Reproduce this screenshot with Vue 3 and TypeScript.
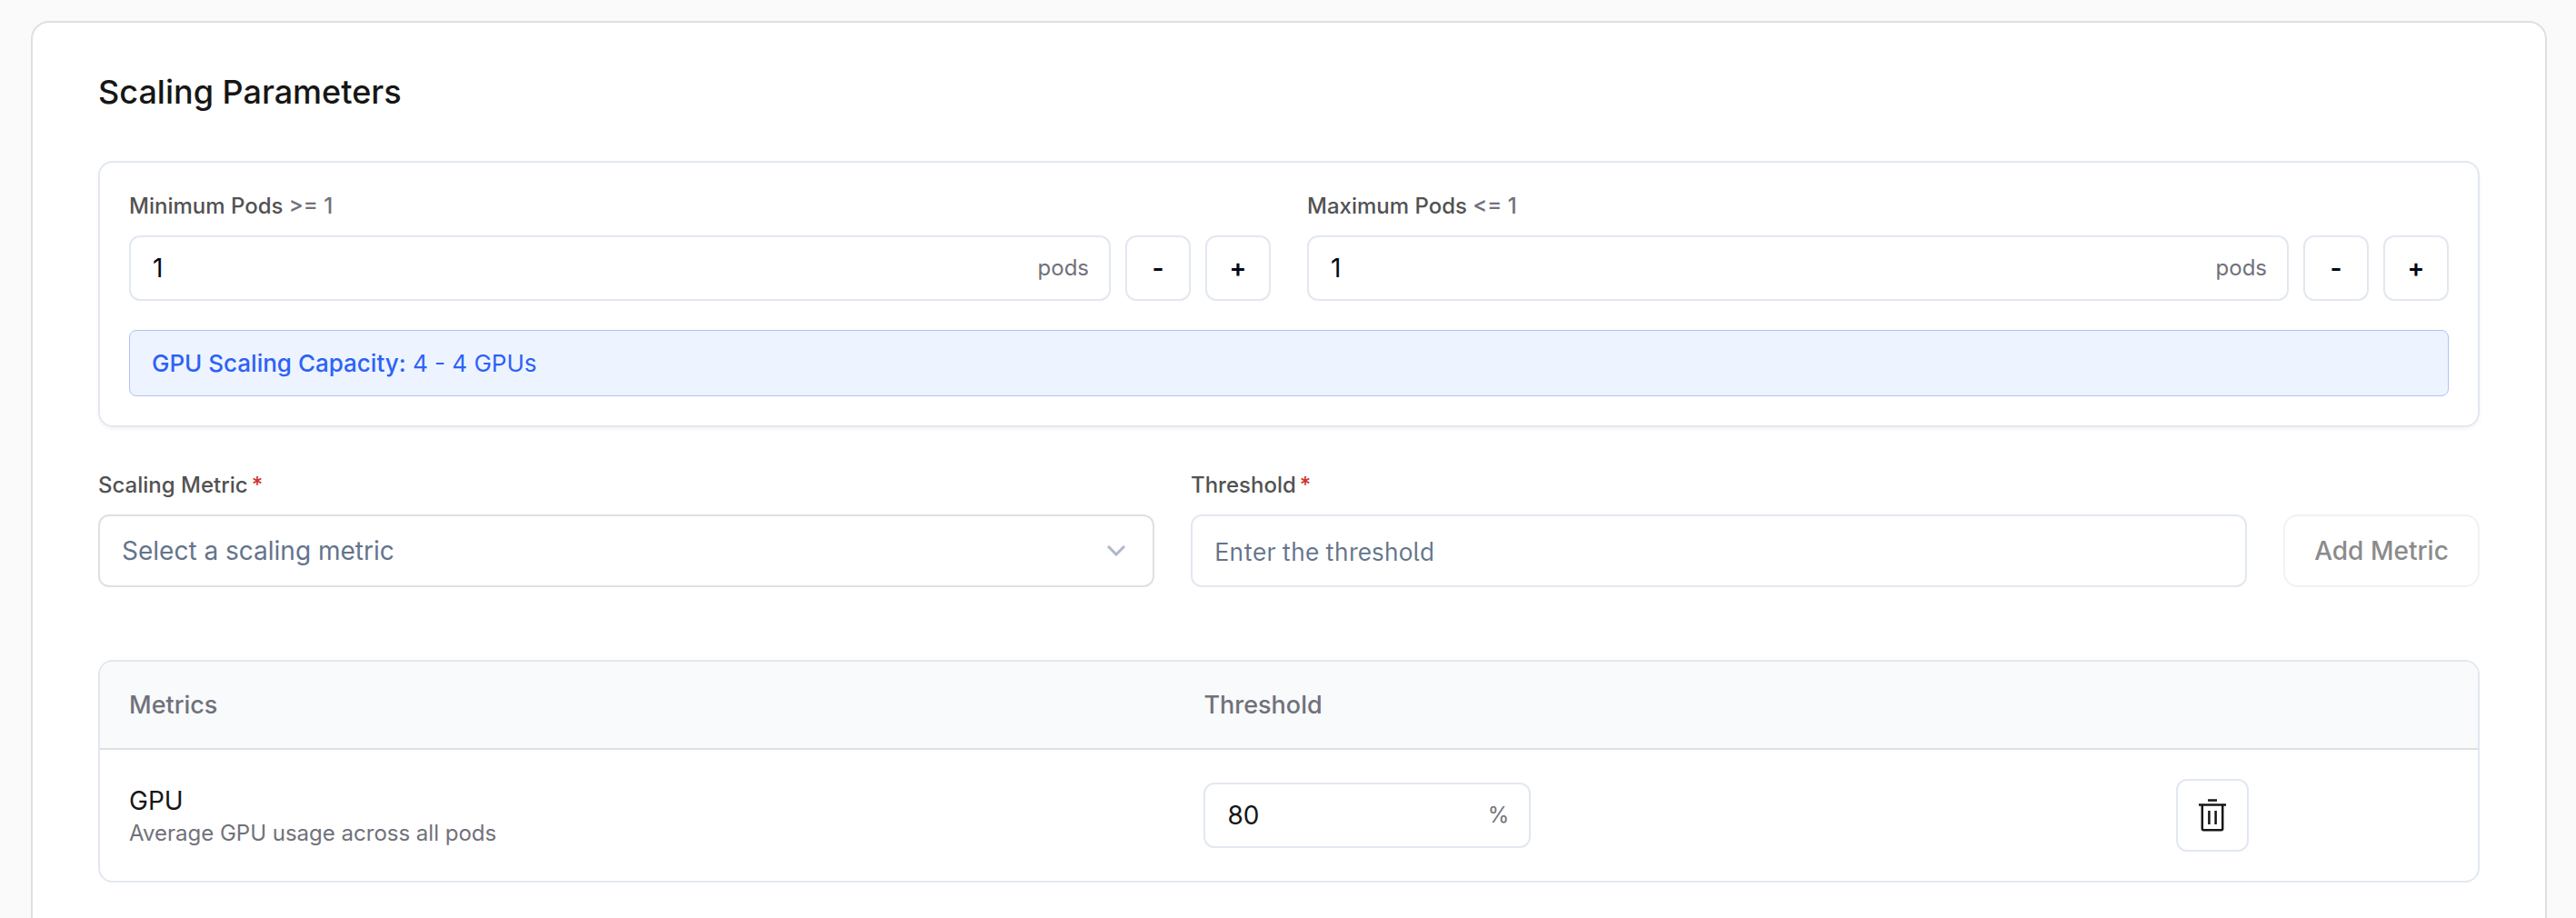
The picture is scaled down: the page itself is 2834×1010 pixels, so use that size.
<script setup lang="ts">
import { ref, reactive } from 'vue'

interface PodField {
  id: string
  label: string
  hint: string
  value: number
}

interface Metric {
  id: string
  name: string
  description: string
  threshold: number
}

const GPUS_PER_POD = 4

const podFields = reactive<PodField[]>([
  { id: 'min-pods', label: 'Minimum Pods', hint: '>= 1', value: 1 },
  { id: 'max-pods', label: 'Maximum Pods', hint: '<= 1', value: 1 },
])

const metrics = ref<Metric[]>([
  { id: 'gpu', name: 'GPU', description: 'Average GPU usage across all pods', threshold: 80 },
])

const selectedMetric = ref('')
const threshold = ref('')

function step(field: PodField, delta: number) {
  field.value = Math.max(1, Number(field.value) + delta)
}

function removeMetric(id: string) {
  metrics.value = metrics.value.filter((m) => m.id !== id)
}
</script>

<template>
  <main class="page">
    <section class="card">
      <h1 class="title">Scaling Parameters</h1>

      <div class="panel">
        <div class="pods">
          <div v-for="field in podFields" :key="field.id" class="field">
            <label class="label" :for="field.id">{{ field.label }} <span class="hint">{{ field.hint }}</span></label>
            <div class="stepper">
              <div class="box">
                <input :id="field.id" v-model="field.value" class="box-input dark" type="text" inputmode="numeric" />
                <span class="unit">pods</span>
              </div>
              <button type="button" class="step" :aria-label="'Decrease ' + field.label" @click="step(field, -1)">-</button>
              <button type="button" class="step" :aria-label="'Increase ' + field.label" @click="step(field, 1)">+</button>
            </div>
          </div>
        </div>
        <p class="capacity">
          <strong>GPU Scaling Capacity:</strong> {{ podFields[0].value * GPUS_PER_POD }} - {{ podFields[1].value * GPUS_PER_POD }} GPUs
        </p>
      </div>

      <form class="add-row" @submit.prevent>
        <div class="field grow">
          <label class="label" for="metric">Scaling Metric<span class="required">*</span></label>
          <div class="select-wrap">
            <select id="metric" v-model="selectedMetric" class="select">
              <option value="">Select a scaling metric</option>
              <option value="cpu">CPU</option>
            </select>
            <svg class="chevron" viewBox="0 0 20 12" aria-hidden="true">
              <path d="M1 1l9 9 9-9" />
            </svg>
          </div>
        </div>
        <div class="field grow">
          <label class="label" for="threshold">Threshold<span class="required">*</span></label>
          <input id="threshold" v-model="threshold" class="text-input" type="text" placeholder="Enter the threshold" />
        </div>
        <button type="submit" class="add" disabled>Add Metric</button>
      </form>

      <div class="table-wrap">
        <table class="table">
          <colgroup>
            <col class="col-metric" />
            <col class="col-threshold" />
            <col />
          </colgroup>
          <thead>
            <tr>
              <th scope="col">Metrics</th>
              <th scope="col">Threshold</th>
              <th></th>
            </tr>
          </thead>
          <tbody>
            <tr v-for="metric in metrics" :key="metric.id">
              <td>
                <div class="metric-name">{{ metric.name }}</div>
                <div class="metric-desc">{{ metric.description }}</div>
              </td>
              <td>
                <div class="box small">
                  <input v-model="metric.threshold" class="box-input" type="text" inputmode="numeric" :aria-label="metric.name + ' threshold'" />
                  <span class="unit">%</span>
                </div>
              </td>
              <td>
                <button type="button" class="trash" :aria-label="'Remove ' + metric.name" @click="removeMetric(metric.id)">
                  <svg viewBox="0 0 40 40" aria-hidden="true">
                    <path d="M15 3.5h10M5 8.5h30M8.8 8.5v26.3q0 1.5 1.5 1.5h19.4q1.5 0 1.5-1.5V8.5M16.4 15v15M23.6 15v15" />
                  </svg>
                </button>
              </td>
            </tr>
          </tbody>
        </table>
      </div>
    </section>
  </main>
</template>

<style>
html,
body {
  background: #fafafa;
}
body {
  margin: 0;
  overflow: hidden;
}
</style>

<style scoped>
*,
*::before,
*::after {
  box-sizing: border-box;
}
.page {
  padding: 23px 32px 0 34px;
  font-family: Inter, "Liberation Sans", sans-serif;
  font-size: 28px;
  line-height: 40px;
  color: #161616;
}
.card {
  padding: 48px 72px 72px;
  background: #fff;
  border: 2px solid #e0e0e0;
  border-radius: 20px;
}
button,
input,
select {
  font: inherit;
  color: inherit;
  margin: 0;
}
input {
  outline: none;
}
.title {
  margin: 0 0 48px;
  font-size: 36px;
  line-height: 56px;
  font-weight: 500;
}
.panel {
  padding: 32px;
  border: 2px solid #e2e8f0;
  border-radius: 16px;
  box-shadow: 0 2px 4px rgba(0, 0, 0, 0.05);
}
.pods {
  display: grid;
  grid-template-columns: 1fr 1fr;
  gap: 40px;
}
.field {
  display: flex;
  flex-direction: column;
  gap: 16px;
  min-width: 0;
}
.label {
  font-size: 24px;
  line-height: 32px;
  font-weight: 500;
  color: #525252;
}
.hint {
  color: #71717a;
}
.required {
  margin-left: 4px;
  color: #d0342c;
}
.stepper {
  display: flex;
  gap: 16px;
}
.box {
  display: flex;
  flex: 1;
  align-items: center;
  min-width: 0;
  height: 72px;
  padding: 0 22px 0 24px;
  background: #fff;
  border: 2px solid #e2e8f0;
  border-radius: 12px;
}
.box.small {
  width: 360px;
}
.box-input {
  flex: 1;
  min-width: 0;
  height: 100%;
  padding: 0;
  border: 0;
  background: transparent;
}
.dark {
  color: #020817;
}
.unit {
  font-size: 24px;
  color: #71717a;
}
.step {
  width: 72px;
  height: 72px;
  padding: 0;
  font-weight: 600;
  color: #020817;
  background: #fff;
  border: 2px solid #e2e8f0;
  border-radius: 12px;
}
.capacity {
  margin: 32px 0 0;
  padding: 16px 24px;
  font-size: 26px;
  line-height: 39px;
  color: #2d62f6;
  background: #edf4ff;
  border: 1px solid #afc3f0;
  border-radius: 8px;
}
.capacity strong {
  font-weight: 500;
}
.add-row {
  display: flex;
  align-items: flex-end;
  gap: 40px;
  margin: 48px 0 80px;
}
.grow {
  flex: 1;
}
.select-wrap {
  position: relative;
}
.select,
.text-input {
  display: block;
  width: 100%;
  height: 80px;
  padding: 0 24px;
  background: #fff;
  border: 2px solid #e2e8f0;
  border-radius: 12px;
}
.select {
  appearance: none;
  color: #64748b;
  border-color: #e0e0e0;
}
.text-input {
  font-family: "IBM Plex Sans", Roboto, sans-serif;
}
.text-input::placeholder {
  color: #64748b;
  opacity: 1;
}
.chevron {
  position: absolute;
  top: 34px;
  right: 32px;
  width: 20px;
  height: 12px;
  fill: none;
  stroke: #b0b8c8;
  stroke-width: 3;
  pointer-events: none;
}
.add {
  width: 216px;
  height: 80px;
  padding: 0;
  font-weight: 500;
  color: #8b8b8b;
  background: #fff;
  border: 2px solid #f1f1f6;
  border-radius: 16px;
}
.table-wrap {
  border: 2px solid #e2e8f0;
  border-radius: 16px;
  overflow: hidden;
}
.table {
  width: 100%;
  table-layout: fixed;
  border-spacing: 0;
}
.col-metric {
  width: 45.2%;
}
.col-threshold {
  width: 40.9%;
}
.table th {
  height: 97px;
  padding: 0 32px;
  text-align: left;
  font-size: 27px;
  font-weight: 500;
  color: #71717a;
  background: #f8fafc;
  border-bottom: 2px solid #e0e0e0;
}
.table td {
  padding: 32px;
  vertical-align: middle;
}
.metric-name {
  line-height: 40px;
}
.metric-desc {
  font-size: 24px;
  line-height: 32px;
  color: #71717a;
}
.trash {
  display: flex;
  align-items: center;
  justify-content: center;
  width: 80px;
  height: 80px;
  padding: 0;
  background: #fff;
  border: 2px solid #e2e8f0;
  border-radius: 12px;
}
.trash svg {
  width: 40px;
  height: 40px;
  fill: none;
  stroke: #161616;
  stroke-width: 2.5;
}
</style>
